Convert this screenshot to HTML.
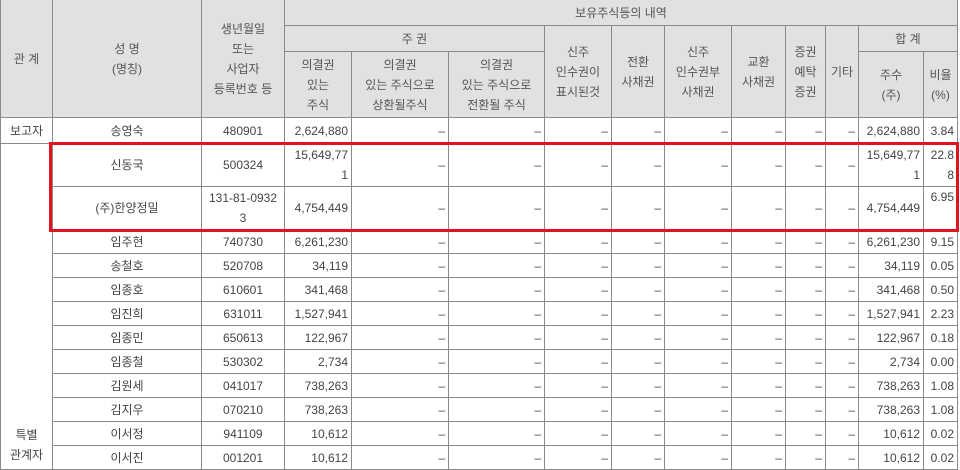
<!DOCTYPE html>
<html><head><meta charset="utf-8"><style>
body{margin:0;background:#fff;width:960px;height:470px;overflow:hidden;position:relative;font-family:"Liberation Sans","Noto Sans CJK KR","NanumGothic",sans-serif;}
table{border-collapse:collapse;table-layout:fixed;position:absolute;left:0;top:-1px;font-size:12px;color:#444;}
td{border:1px solid #8a8a8a;padding:0 3px;text-align:center;line-height:20px;white-space:nowrap;overflow:hidden}
thead td{background:#e1e1e1;color:#555;}
td.r{text-align:right}
tbody tr{height:24px}
.box{position:absolute;left:49px;top:142px;width:904px;height:84px;border:3px solid #e0141e;}
</style></head><body>
<table>
<colgroup><col style="width:52px"><col style="width:149px"><col style="width:83px"><col style="width:67px"><col style="width:97px"><col style="width:96px"><col style="width:67px"><col style="width:53px"><col style="width:67px"><col style="width:54px"><col style="width:40px"><col style="width:33px"><col style="width:65px"><col style="width:34px"></colgroup>
<thead>
<tr style="height:26px"><td rowspan="3">관 계</td><td rowspan="3">성 명<br>(명칭)</td><td rowspan="3">생년월일<br>또는<br>사업자<br>등록번호 등</td><td colspan="11">보유주식등의 내역</td></tr>
<tr style="height:26px"><td colspan="3">주 권</td><td rowspan="2">신주<br>인수권이<br>표시된것</td><td rowspan="2">전환<br>사채권</td><td rowspan="2">신주<br>인수권부<br>사채권</td><td rowspan="2">교환<br>사채권</td><td rowspan="2">증권<br>예탁<br>증권</td><td rowspan="2">기타</td><td colspan="2">합 계</td></tr>
<tr style="height:66px"><td>의결권<br>있는<br>주식</td><td>의결권<br>있는 주식으로<br>상환될주식</td><td>의결권<br>있는 주식으로<br>전환될 주식</td><td>주수<br>(주)</td><td>비율<br>(%)</td></tr>
</thead>
<tbody>
<tr style="height:26px"><td>보고자</td><td>송영숙</td><td>480901</td><td class="r">2,624,880</td><td class="r">–</td><td class="r">–</td><td class="r">–</td><td class="r">–</td><td class="r">–</td><td class="r">–</td><td class="r">–</td><td class="r">–</td><td class="r">2,624,880</td><td class="r">3.84</td></tr>
<tr style="height:43px"><td rowspan="13" style="vertical-align:bottom;padding-bottom:4px">특별<br>관계자</td><td>신동국</td><td>500324</td><td class="r">15,649,77<br>1</td><td class="r">–</td><td class="r">–</td><td class="r">–</td><td class="r">–</td><td class="r">–</td><td class="r">–</td><td class="r">–</td><td class="r">–</td><td class="r">15,649,77<br>1</td><td class="r">22.8<br>8</td></tr>
<tr style="height:43px"><td>(주)한양정밀</td><td>131-81-0932<br>3</td><td class="r">4,754,449</td><td class="r">–</td><td class="r">–</td><td class="r">–</td><td class="r">–</td><td class="r">–</td><td class="r">–</td><td class="r">–</td><td class="r">–</td><td class="r">4,754,449</td><td class="r" style="vertical-align:top">6.95</td></tr>
<tr><td>임주현</td><td>740730</td><td class="r">6,261,230</td><td class="r">–</td><td class="r">–</td><td class="r">–</td><td class="r">–</td><td class="r">–</td><td class="r">–</td><td class="r">–</td><td class="r">–</td><td class="r">6,261,230</td><td class="r">9.15</td></tr>
<tr><td>송철호</td><td>520708</td><td class="r">34,119</td><td class="r">–</td><td class="r">–</td><td class="r">–</td><td class="r">–</td><td class="r">–</td><td class="r">–</td><td class="r">–</td><td class="r">–</td><td class="r">34,119</td><td class="r">0.05</td></tr>
<tr><td>임종호</td><td>610601</td><td class="r">341,468</td><td class="r">–</td><td class="r">–</td><td class="r">–</td><td class="r">–</td><td class="r">–</td><td class="r">–</td><td class="r">–</td><td class="r">–</td><td class="r">341,468</td><td class="r">0.50</td></tr>
<tr><td>임진희</td><td>631011</td><td class="r">1,527,941</td><td class="r">–</td><td class="r">–</td><td class="r">–</td><td class="r">–</td><td class="r">–</td><td class="r">–</td><td class="r">–</td><td class="r">–</td><td class="r">1,527,941</td><td class="r">2.23</td></tr>
<tr><td>임종민</td><td>650613</td><td class="r">122,967</td><td class="r">–</td><td class="r">–</td><td class="r">–</td><td class="r">–</td><td class="r">–</td><td class="r">–</td><td class="r">–</td><td class="r">–</td><td class="r">122,967</td><td class="r">0.18</td></tr>
<tr><td>임종철</td><td>530302</td><td class="r">2,734</td><td class="r">–</td><td class="r">–</td><td class="r">–</td><td class="r">–</td><td class="r">–</td><td class="r">–</td><td class="r">–</td><td class="r">–</td><td class="r">2,734</td><td class="r">0.00</td></tr>
<tr><td>김원세</td><td>041017</td><td class="r">738,263</td><td class="r">–</td><td class="r">–</td><td class="r">–</td><td class="r">–</td><td class="r">–</td><td class="r">–</td><td class="r">–</td><td class="r">–</td><td class="r">738,263</td><td class="r">1.08</td></tr>
<tr><td>김지우</td><td>070210</td><td class="r">738,263</td><td class="r">–</td><td class="r">–</td><td class="r">–</td><td class="r">–</td><td class="r">–</td><td class="r">–</td><td class="r">–</td><td class="r">–</td><td class="r">738,263</td><td class="r">1.08</td></tr>
<tr><td>이서정</td><td>941109</td><td class="r">10,612</td><td class="r">–</td><td class="r">–</td><td class="r">–</td><td class="r">–</td><td class="r">–</td><td class="r">–</td><td class="r">–</td><td class="r">–</td><td class="r">10,612</td><td class="r">0.02</td></tr>
<tr><td>이서진</td><td>001201</td><td class="r">10,612</td><td class="r">–</td><td class="r">–</td><td class="r">–</td><td class="r">–</td><td class="r">–</td><td class="r">–</td><td class="r">–</td><td class="r">–</td><td class="r">10,612</td><td class="r">0.02</td></tr>
</tbody></table>
<div class="box"></div>
</body></html>
